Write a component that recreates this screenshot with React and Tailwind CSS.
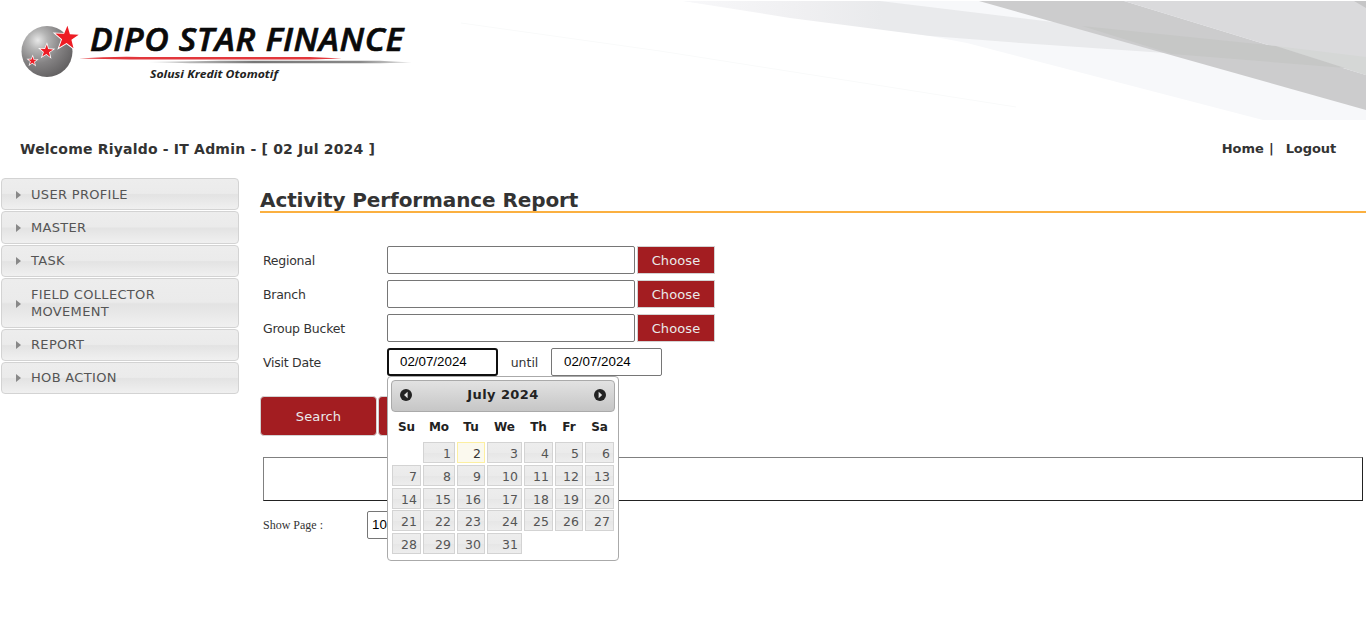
import React from "react";

const menu = [
  ["USER PROFILE", "h-[32px]"],
  ["MASTER", "h-[33px]"],
  ["TASK", "h-[32px] pb-[2px]"],
  ["FIELD COLLECTOR MOVEMENT", "h-[50px]"],
  ["REPORT", "h-[32px] pb-[2px]"],
  ["HOB ACTION", "h-[32px] pb-[2px]"],
];

const weeks = [
  [null, 1, 2, 3, 4, 5, 6],
  [7, 8, 9, 10, 11, 12, 13],
  [14, 15, 16, 17, 18, 19, 20],
  [21, 22, 23, 24, 25, 26, 27],
  [28, 29, 30, 31, null, null, null],
];

const star = "0,-10 2.35,-3.24 9.51,-3.09 3.8,1.24 5.88,8.09 0,4 -5.88,8.09 -3.8,1.24 -9.51,-3.09 -2.35,-3.24";

function Banner() {
  return (
    <svg className="block h-[120px] w-full" width="1366" height="120" viewBox="0 0 1366 120">
      <defs>
        <radialGradient id="ball" cx="0.32" cy="0.28" r="0.75">
          <stop offset="0" stopColor="#e8e8e8" />
          <stop offset="0.25" stopColor="#b5b5b5" />
          <stop offset="0.6" stopColor="#858384" />
          <stop offset="1" stopColor="#656364" />
        </radialGradient>
        <linearGradient id="fade" x1="0" x2="1" y1="0" y2="0">
          <stop offset="0" stopColor="#f8f8fa" />
          <stop offset="0.25" stopColor="#efeff1" />
          <stop offset="0.4" stopColor="#e9eaec" />
          <stop offset="1" stopColor="#e9eaec" />
        </linearGradient>
        <linearGradient id="shade" x1="0" x2="1" y1="0" y2="0">
          <stop offset="0" stopColor="#777" stopOpacity="0.2" />
          <stop offset="0.4" stopColor="#777" />
          <stop offset="0.8" stopColor="#888" />
          <stop offset="1" stopColor="#999" stopOpacity="0.3" />
        </linearGradient>
      </defs>
      <path d="M683 1H1366V120H1263L967 43L930 36Z" fill="#f7f8fa" />
      <path d="M683 1H880L1078 25L1180 54L1020 43L930 36L790 18Z" fill="url(#fade)" />
      <path d="M979 1H1124L1366 75V110Z" fill="#cccccd" />
      <path d="M1124 1H1366V75Z" fill="#dadadc" />
      <path d="M1276 46L1366 57V75Z" fill="#d5d7d6" />
      <path d="M1082 26L1276 46L1345 68L1172 54Z" fill="#c6c7c6" />
      <path d="M1354 1H1366V8Z" fill="#c5c5c6" />
      <path d="M461 23L660 51L1016 107" fill="none" stroke="#f9fafa" />
      <circle cx="47" cy="51.5" r="25.5" fill="url(#ball)" />
      <g fill="#ed1c24" stroke="#fff" paintOrder="stroke">
        <polygon points={star} transform="translate(66.8 38) rotate(3) scale(1.23)" strokeWidth="1.5" />
        <polygon points={star} transform="translate(46.5 51.2) rotate(3) scale(.68)" strokeWidth="2.2" />
        <polygon points={star} transform="translate(32.5 61) rotate(3) scale(.44)" strokeWidth="3" />
      </g>
      <text x="90" y="51" textLength="314" lengthAdjust="spacingAndGlyphs" fontFamily="Open Sans" fontWeight="600" fontStyle="italic" fontSize="32" letterSpacing="0.6" fill="#0a0a0a" stroke="#0a0a0a" strokeWidth="0.7">DIPO STAR FINANCE</text>
      <path d="M79 58.5Q110 56.4 140 57H310L342 58.6L310 59.5H130Z" fill="#e2373c" />
      <path d="M148 62L220 60.7H380L412 62.5L380 63.2H190Z" fill="url(#shade)" />
      <text x="150" y="77.5" textLength="128" lengthAdjust="spacingAndGlyphs" fontFamily="Open Sans" fontWeight="700" fontStyle="italic" fontSize="11.3" fill="#222">Solusi Kredit Otomotif</text>
    </svg>
  );
}

function Row({ label, children }) {
  return (
    <div className="flex h-[34px] items-start">
      <div className="w-[127px] pl-[3px] text-[12.5px] leading-[29px] tracking-[-0.25px]">{label}</div>
      {children}
    </div>
  );
}

function ChooseRow({ label }) {
  return (
    <Row label={label}>
      <input className="h-[28px] w-[248px] rounded-[2px] border border-[#767676] bg-white" />
      <button className="ml-[2px] h-[28px] w-[78px] border border-[#d3d3d3] bg-[#a31d21] pt-[2px] text-[13px] leading-[24px] tracking-[0.1px] text-[#eaeaea]">Choose</button>
    </Row>
  );
}

function Arrow({ left }) {
  return (
    <svg className="-mt-[2px]" width="12" height="12" viewBox="0 0 12 12">
      <circle cx="6" cy="6" r="6" fill="#222" />
      <path d={left ? "M7.6 2.8V9.2L4 6Z" : "M4.6 2.8V9.2L8.2 6Z"} fill="#e4e4e4" />
    </svg>
  );
}

function Calendar() {
  return (
    <div className="absolute left-[387px] top-[376px] h-[185px] w-[232px] rounded-[4px] border border-[#aaa] bg-white px-[3px] pt-[3px] text-[#222]">
      <div className="flex h-[32px] items-center justify-between rounded-[4px] border border-[#aaa] bg-linear-to-b from-[#e2e2e2] to-[#c6c6c6] px-[8px]">
        <Arrow left />
        <span className="pb-[2px] text-[13px] font-bold leading-[26px] tracking-[0.4px]">July 2024</span>
        <Arrow />
      </div>
      <div className="mt-[7px] grid grid-cols-[29px_32px_28px_35px_29px_28px_29px] gap-x-[2px] pl-px text-center text-[12px] font-bold leading-[16px]">
        {["Su", "Mo", "Tu", "We", "Th", "Fr", "Sa"].map((d) => <div key={d}>{d}</div>)}
      </div>
      <div className="mt-[7px] grid grid-cols-[29px_32px_28px_35px_29px_28px_29px] gap-x-[2px] gap-y-[1.75px] pl-px">
        {weeks.flat().map((d, i) =>
          d === null ? <div key={i} /> : (
            <div
              key={i}
              className={
                "h-[21px] border pr-[3px] text-right text-[12.5px] leading-[21px] " +
                (d === 2
                  ? "border-[#fcefa1] bg-[#fbf9ee] text-[#363636]"
                  : "border-[#d3d3d3] bg-[linear-gradient(#ededed_0%,#ebebeb_50%,#e6e6e6_51%,#ededed_100%)] text-[#555]")
              }
            >
              {d}
            </div>
          )
        )}
      </div>
    </div>
  );
}

export default function App() {
  return (
    <div className="relative h-[627px] w-full overflow-hidden bg-white font-['DejaVu_Sans',sans-serif] text-[#333]">
      <Banner />
      <div className="flex h-[58px] items-start justify-between pl-[20px] pr-[30px] pt-[19px] font-bold leading-[20px]">
        <div className="text-[14px] tracking-[0.2px]">Welcome Riyaldo - IT Admin - [ 02 Jul 2024 ]</div>
        <div className="flex text-[13px]">
          <span>Home</span><span className="ml-[5px]">|</span><span className="ml-[12px] tracking-[-0.1px]">Logout</span>
        </div>
      </div>
      <div className="flex items-start">
        <nav className="ml-px flex w-[238px] flex-col gap-px">
          {menu.map(([label, h]) => (
            <div key={label} className={"flex items-center rounded-[4px] border border-[#d3d3d3] bg-[linear-gradient(#ededed_0%,#ebebeb_48%,#e3e3e3_52%,#f0f0f0_100%)] pl-[14px] text-[13px] leading-[17px] tracking-[0.32px] text-[#555] " + h}>
              <svg className="mr-[10px] mt-px shrink-0" width="5" height="8" viewBox="0 0 5 8"><path d="M0 0L5 4L0 8Z" fill="#888" /></svg>
              <span className="w-[150px]">{label}</span>
            </div>
          ))}
        </nav>
        <main className="ml-[21px] flex-1">
          <h1 className="h-[35px] border-b-2 border-[#fbb040] pt-[9px] text-[20px] font-bold leading-[27px] tracking-[-0.1px]">Activity Performance Report</h1>
          <div className="mt-[33px]">
            <ChooseRow label="Regional" />
            <ChooseRow label="Branch" />
            <ChooseRow label="Group Bucket" />
            <Row label="Visit Date">
              <input readOnly value="02/07/2024" className="h-[28px] w-[111px] rounded-[3px] border-2 border-[#101010] pb-[2px] pl-[11px] font-['Liberation_Sans',sans-serif] text-[13.33px] text-black" />
              <span className="w-[53px] text-center text-[12.5px] leading-[29px]">until</span>
              <input readOnly value="02/07/2024" className="h-[28px] w-[111px] rounded-[2px] border border-[#767676] pb-[2px] pl-[12px] font-['Liberation_Sans',sans-serif] text-[13.33px] text-black" />
            </Row>
          </div>
          <div className="mt-[14px] flex gap-px">
            <button className="h-[40px] w-[117px] rounded-[4px] border border-[#d3d3d3] bg-[#a31d21] pt-[2px] text-[13px] tracking-[0.1px] text-[#eaeaea]">Search</button>
            <button className="h-[40px] w-[117px] rounded-[4px] border border-[#d3d3d3] bg-[#a31d21]" />
          </div>
          <div className="ml-[3px] mr-[3px] mt-[21px] h-[44px] border border-b-[#222] border-l-[#808080] border-r-[#222] border-t-[#808080]" />
          <div className="ml-[3px] mt-[10px] flex h-[28px]">
            <span className="w-[104px] font-['Liberation_Serif',serif] text-[12px] leading-[28px]">Show Page :</span>
            <div className="w-[60px] rounded-[2px] border border-[#767676] pl-[4px] font-['Liberation_Sans',sans-serif] text-[13.33px] leading-[26px] text-black">10</div>
          </div>
        </main>
      </div>
      <Calendar />
    </div>
  );
}
